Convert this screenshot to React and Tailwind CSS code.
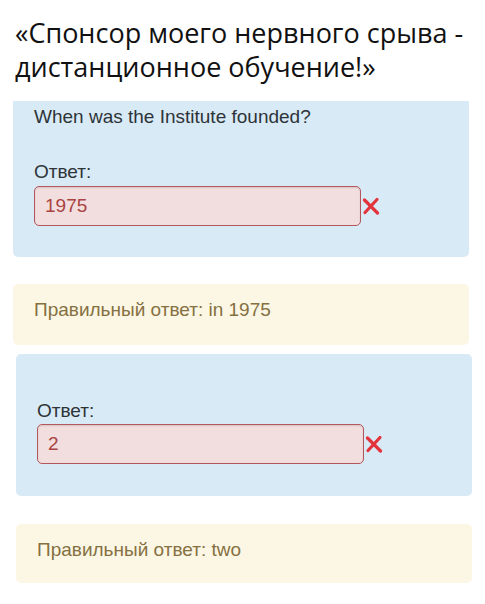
import React from "react"

const CrossIcon = () => (
  <svg width="18" height="18" viewBox="0 0 18 18" className="ml-[1px] shrink-0">
    <path d="M2.5 3 L15.5 16" stroke="#e3343c" strokeWidth="3.2" strokeLinecap="round" />
    <path d="M15 2.5 L3 15.5" stroke="#e3343c" strokeWidth="3.2" strokeLinecap="round" />
  </svg>
)

const AnswerInput = ({ value }) => (
  <div className="flex items-center">
    <div className="w-[327px] h-[40px] flex items-center pl-[10px] bg-[#f2dede] border border-[#b4575d] rounded-[5px] shadow-[inset_0_1px_2px_rgba(0,0,0,0.12)] text-[19px] text-[#a94442]">
      {value}
    </div>
    <CrossIcon />
  </div>
)

const Correct = ({ text, className }) => (
  <div className={"bg-[#fcf7e4] rounded-[5px] pl-[21px] pt-[15px] text-[19px] leading-[22px] text-[#857042] " + className}>
    Правильный ответ: {text}
  </div>
)

export default function App() {
  return (
    <div className="w-[485px] h-[604px] bg-white overflow-hidden" style={{ fontFamily: "'Liberation Sans', Arial, sans-serif" }}>
      <div
        className="px-[15px] pt-[16px] text-[27px] leading-[34px] text-[#111]"
        style={{ fontFamily: "'Open Sans', 'Noto Sans', sans-serif" }}
      >
        «Спонсор моего нервного срыва - дистанционное обучение!»
      </div>
      <div className="mt-[17px] ml-[13px] w-[456px]">
        <div className="bg-[#d9eaf7] rounded-b-[5px] pl-[21px] pt-[5px] h-[156px]">
          <div className="text-[19px] leading-[22px] text-[#2d3438]">When was the Institute founded?</div>
          <div className="text-[19px] leading-[22px] text-[#2d3438] mt-[33px] mb-[3px]">Ответ:</div>
          <AnswerInput value="1975" />
        </div>
        <Correct text="in 1975" className="mt-[27px] h-[61px]" />
      </div>
      <div className="mt-[9px] ml-[16px] w-[456px]">
        <div className="bg-[#d9eaf7] rounded-[5px] pl-[21px] pt-[46px] h-[142px]">
          <div className="text-[19px] leading-[22px] text-[#2d3438] mb-[2px]">Ответ:</div>
          <AnswerInput value="2" />
        </div>
        <Correct text="two" className="mt-[28px] h-[59px]" />
      </div>
    </div>
  )
}
